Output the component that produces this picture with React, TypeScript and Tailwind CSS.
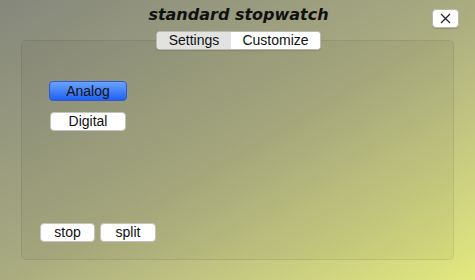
import React, { useState } from "react";

export default function App() {
  const [tab, setTab] = useState("Settings");
  const [mode, setMode] = useState("Analog");

  return (
    <div
      className="relative w-[475px] h-[280px] overflow-hidden bg-gradient-to-br from-[#85877c] via-[#a9ab80] to-[#e3e87e] text-[14px] text-[#111]"
      style={{ fontFamily: '"Liberation Sans", Arial, sans-serif' }}
    >
      {/* Header */}
      <div className="relative h-[31px] flex justify-center">
        <h1
          className="pt-[4px] pl-[2px] text-[16px] leading-[22px] font-bold italic text-[#111]"
          style={{ fontFamily: '"DejaVu Sans", Verdana, sans-serif' }}
        >
          standard stopwatch
        </h1>
        <button className="absolute right-[16px] top-[9px] w-[27px] h-[19px] rounded-[4px] bg-white border border-[#b8b8b0] flex items-center justify-center shadow-[0_1px_1px_rgba(0,0,0,0.15)]">
          <svg width="11" height="11" viewBox="0 0 11 11">
            <path d="M1 1 L10 10 M10 1 L1 10" stroke="#222" strokeWidth="1.2" />
          </svg>
        </button>
      </div>

      {/* Tabs */}
      <div className="relative z-10 -mb-[10px] flex justify-center pl-[2px]">
        <div className="flex h-[19px] rounded-[4px] border border-[#b9b9b2] bg-white overflow-hidden shadow-[0_1px_1px_rgba(0,0,0,0.12)]">
          {["Settings", "Customize"].map((t) => (
            <button
              key={t}
              onClick={() => setTab(t)}
              className={`leading-[17px] text-[14px] ${
                t === "Settings" ? "w-[74px] bg-[#e2e2e0]" : "w-[89px] bg-white"
              } ${tab === t ? "" : ""}`}
            >
              {t}
            </button>
          ))}
        </div>
      </div>

      {/* Panel */}
      <div className="mx-[21px] h-[220px] rounded-[5px] border border-[rgba(0,0,0,0.07)] bg-[rgba(0,0,0,0.035)] flex flex-col">
        <div className="mt-[40px] ml-[27px] flex flex-col items-start gap-[11px]">
          <button
            onClick={() => setMode("Analog")}
            className={`w-[78px] h-[20px] rounded-[4px] leading-[18px] border ${
              mode === "Analog"
                ? "bg-gradient-to-b from-[#6aa2fc] to-[#1f5ff2] border-[#3358cc]"
                : "bg-white border-[#c4c4bc]"
            }`}
          >
            Analog
          </button>
          <button
            onClick={() => setMode("Digital")}
            className={`ml-[1px] w-[76px] h-[19px] rounded-[4px] leading-[17px] border ${
              mode === "Digital"
                ? "bg-gradient-to-b from-[#6aa2fc] to-[#1f5ff2] border-[#3358cc]"
                : "bg-white border-[#c4c4bc]"
            }`}
          >
            Digital
          </button>
        </div>
        <div className="flex-1" />
        <div className="mb-[17px] ml-[18px] flex gap-[5px]">
          <button className="w-[55px] h-[19px] rounded-[4px] bg-white border border-[#c4c4bc] leading-[17px]">
            stop
          </button>
          <button className="w-[56px] h-[19px] rounded-[4px] bg-white border border-[#c4c4bc] leading-[17px]">
            split
          </button>
        </div>
      </div>
    </div>
  );
}
